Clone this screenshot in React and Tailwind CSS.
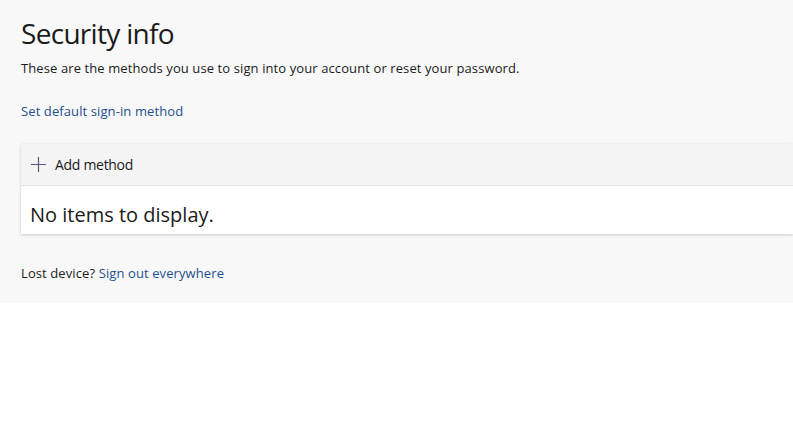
import React from "react";

const App = () => {
  return (
    <div className="w-[793px] h-[444px] bg-white" style={{ fontFamily: '"Open Sans", "Noto Sans", sans-serif' }}>
      <div className="h-[303px] bg-[#f8f8f8] pl-[21px] pt-[14px]">
        <h1 className="text-[28px] leading-[38px] text-[#1b1b1b] tracking-[-0.7px]">Security info</h1>
        <p className="mt-[7px] text-[13px] leading-[18px] text-[#1b1b1b] tracking-[0.1px]">
          These are the methods you use to sign into your account or reset your password.
        </p>
        <a className="block mt-[25px] text-[13px] leading-[18px] text-[#1f4f8f] tracking-[0.1px]">
          Set default sign-in method
        </a>

        {/* methods card */}
        <div className="mt-[24px] bg-white shadow-[0_1px_3px_rgba(0,0,0,0.2)]">
          <div className="h-[42px] bg-[#f4f4f4] border-b border-[#e1e1e1] flex items-center pl-[9px]">
            <svg width="17" height="17" viewBox="0 0 17 17" className="mr-[8px]">
              <path d="M8.5 1v15M1 8.5h15" stroke="#5a5a8a" strokeWidth="1.2" />
            </svg>
            <span className="text-[14px] text-[#1b1b1b] tracking-[-0.3px]">Add method</span>
          </div>
          <div className="h-[48px] pl-[9px] pt-[15px]">
            <span className="block text-[20px] leading-[28px] text-[#1b1b1b]">No items to display.</span>
          </div>
        </div>

        <p className="mt-[30px] text-[13px] leading-[18px] text-[#1b1b1b] tracking-[0.1px]">
          Lost device? <a className="text-[#1f4f8f]">Sign out everywhere</a>
        </p>
      </div>
    </div>
  );
};

export default App;
